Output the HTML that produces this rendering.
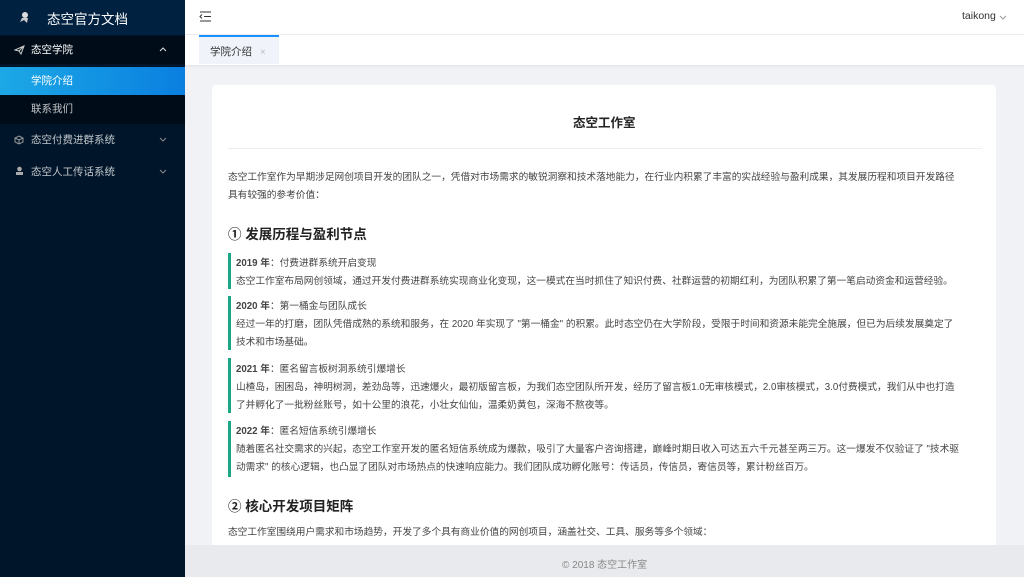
<!DOCTYPE html>
<html><head><meta charset="utf-8"><style>
*{margin:0;padding:0;box-sizing:border-box}
body{width:1024px;height:577px;overflow:hidden;background:#f0f2f5;font-family:"Liberation Sans","Noto Sans CJK SC",sans-serif;position:relative;color:#333}
.sb{position:absolute;left:0;top:0;width:185px;height:577px;background:#001529}
.logo{height:35px;background:#002140;color:#fff;font-size:13.5px;display:flex;align-items:center;padding-left:47px}
.mi{position:absolute;left:0;width:185px;height:28px;font-size:10.5px;color:rgba(255,255,255,.75);line-height:28px}
.ab{position:absolute;white-space:nowrap}
.t{font-size:9.7px;color:#444}
</style></head><body>
<div class="sb">
 <div class="logo">态空官方文档</div>
 <svg class="ab" style="left:19px;top:11px" width="12" height="13" viewBox="0 0 12 13"><circle cx="6" cy="4" r="3" fill="#ddd"/><path d="M3 7l-2 4 4-2 3 3 1-5z" fill="#ccc"/></svg>
 <div class="mi" style="top:36px;background:#000c17"></div>
 <div class="mi" style="top:36px;padding-left:31px;color:#fff">态空学院</div>
 <svg class="ab" style="left:14px;top:45px" width="11" height="10" viewBox="0 0 11 10"><path d="M1 5L10 1 7 9 5 6zM5 6L10 1" fill="none" stroke="#ccc" stroke-width="1"/></svg>
 <svg class="ab" style="left:159px;top:47px" width="8" height="5"><path d="M1 4L4 1 7 4" fill="none" stroke="#ddd"/></svg>
 <div class="mi" style="top:67px;height:28px;background:linear-gradient(90deg,#1ca8e6,#0a7fe0);color:#fff;padding-left:31px">学院介绍</div>
 <div class="mi" style="top:95px;height:29px;background:#000c17;padding-left:31px;line-height:29px">联系我们</div>
 <div class="mi" style="top:126px;padding-left:31px">态空付费进群系统</div>
 <svg class="ab" style="left:14px;top:135px" width="10" height="10" viewBox="0 0 10 10"><path d="M5 1L9 3V7L5 9 1 7V3zM1 3L5 5 9 3M5 5V9" fill="none" stroke="#999"/></svg>
 <svg class="ab" style="left:159px;top:137px" width="8" height="5"><path d="M1 1L4 4 7 1" fill="none" stroke="#888"/></svg>
 <div class="mi" style="top:158px;padding-left:31px">态空人工传话系统</div>
 <svg class="ab" style="left:15px;top:166px" width="9" height="10" viewBox="0 0 9 10"><circle cx="4.5" cy="3" r="2.3" fill="#aaa"/><rect x="1" y="6" width="7" height="3" fill="#aaa"/></svg>
 <svg class="ab" style="left:159px;top:169px" width="8" height="5"><path d="M1 1L4 4 7 1" fill="none" stroke="#888"/></svg>
</div>
<div class="ab" style="left:185px;top:0;width:839px;height:35px;background:#fff;border-bottom:1px solid #eee"></div>
<svg class="ab" style="left:199px;top:11px" width="13" height="11" viewBox="0 0 13 11"><path d="M1 1H12M5 5.5H12M1 10H12M3 3.5L1 5.5 3 7.5" fill="none" stroke="#333" stroke-width="1"/></svg>
<div class="ab" style="left:962px;top:10px;font-size:10.5px;color:#333">taikong</div>
<svg class="ab" style="left:999px;top:15px" width="8" height="5"><path d="M1 1L4 4 7 1" fill="none" stroke="#999"/></svg>
<div class="ab" style="left:185px;top:35px;width:839px;height:30px;background:#fff;box-shadow:0 1px 3px rgba(0,0,0,.08)"></div>
<div class="ab" style="left:199px;top:35px;width:80px;height:29px;background:#f0f4fa;border-top:2px solid #1890ff;font-size:10.5px;color:#333;padding:7px 0 0 11px">学院介绍 <span style="color:#bbb;margin-left:5px;font-size:10px">×</span></div>
<div class="ab" style="left:212px;top:85px;width:784px;height:470px;background:#fff;border-radius:4px"></div>
<div class="ab" style="left:573px;top:112px;font-size:12.5px;font-weight:bold;color:#222">态空工作室</div>
<div class="ab" style="left:228px;top:148px;width:754px;height:1px;background:#eee"></div>
<div class="ab t" style="left:228px;top:169px;line-height:18px">态空工作室作为早期涉足网创项目开发的团队之一，凭借对市场需求的敏锐洞察和技术落地能力，在行业内积累了丰富的实战经验与盈利成果，其发展历程和项目开发路径<br>具有较强的参考价值：</div>
<div class="ab" style="left:228px;top:223px;font-size:13.5px;font-weight:bold;color:#222">① 发展历程与盈利节点</div>
<div class="ab" style="left:228px;top:253px;width:3px;height:36px;background:#1ba784"></div>
<div class="ab" style="left:228px;top:296px;width:3px;height:54px;background:#1ba784"></div>
<div class="ab" style="left:228px;top:358px;width:3px;height:55px;background:#1ba784"></div>
<div class="ab" style="left:228px;top:421px;width:3px;height:56px;background:#1ba784"></div>
<div class="ab t" style="left:236px;top:255px;line-height:18px"><b>2019 年</b>：付费进群系统开启变现<br>态空工作室布局网创领域，通过开发付费进群系统实现商业化变现，这一模式在当时抓住了知识付费、社群运营的初期红利，为团队积累了第一笔启动资金和运营经验。</div>
<div class="ab t" style="left:236px;top:298px;line-height:18px"><b>2020 年</b>：第一桶金与团队成长<br>经过一年的打磨，团队凭借成熟的系统和服务，在 2020 年实现了 "第一桶金" 的积累。此时态空仍在大学阶段，受限于时间和资源未能完全施展，但已为后续发展奠定了<br>技术和市场基础。</div>
<div class="ab t" style="left:236px;top:361px;line-height:18px"><b>2021 年</b>：匿名留言板树洞系统引爆增长<br>山楂岛，困困岛，神明树洞，差劲岛等，迅速爆火，最初版留言板，为我们态空团队所开发，经历了留言板1.0无审核模式，2.0审核模式，3.0付费模式，我们从中也打造<br>了并孵化了一批粉丝账号，如十公里的浪花，小壮女仙仙，温柔奶黄包，深海不熬夜等。</div>
<div class="ab t" style="left:236px;top:423px;line-height:18px"><b>2022 年</b>：匿名短信系统引爆增长<br>随着匿名社交需求的兴起，态空工作室开发的匿名短信系统成为爆款，吸引了大量客户咨询搭建，巅峰时期日收入可达五六千元甚至两三万。这一爆发不仅验证了 "技术驱<br>动需求" 的核心逻辑，也凸显了团队对市场热点的快速响应能力。我们团队成功孵化账号：传话员，传信员，寄信员等，累计粉丝百万。</div>
<div class="ab" style="left:228px;top:495px;font-size:13.5px;font-weight:bold;color:#222">② 核心开发项目矩阵</div>
<div class="ab t" style="left:228px;top:524px">态空工作室围绕用户需求和市场趋势，开发了多个具有商业价值的网创项目，涵盖社交、工具、服务等多个领域：</div>
<div class="ab" style="left:185px;top:545px;width:839px;height:32px;background:#e9eaed"></div>
<div class="ab" style="left:562px;top:556px;font-size:10px;color:#888">© 2018 态空工作室</div>
</body></html>
